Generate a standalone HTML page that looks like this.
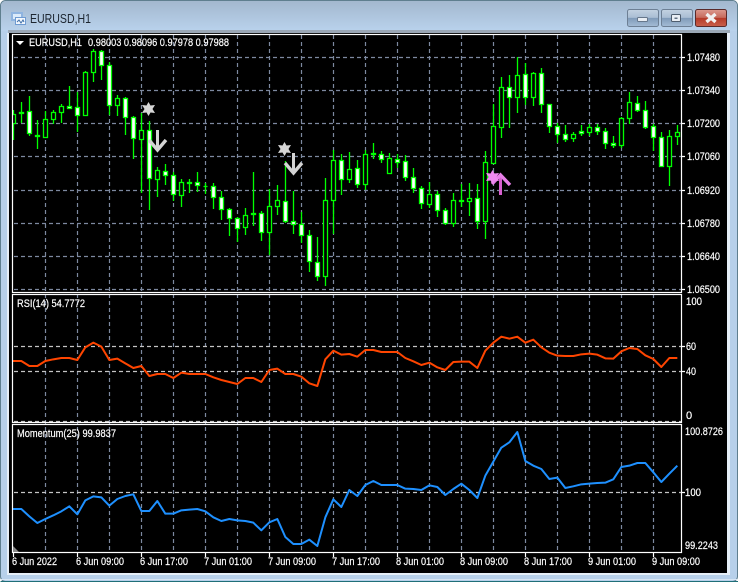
<!DOCTYPE html>
<html><head><meta charset="utf-8"><style>
html,body{margin:0;padding:0;background:#fff}
body{width:739px;height:583px;overflow:hidden}
svg{display:block}
text{font-family:"Liberation Sans",Arial,sans-serif;font-size:11px;fill:#fff;stroke:#fff;stroke-width:.2}
.c{shape-rendering:crispEdges}
</style></head><body>
<svg width="739" height="583" viewBox="0 0 739 583" xmlns="http://www.w3.org/2000/svg">
<defs>
<linearGradient id="t" x1="0" y1="0" x2="0" y2="1"><stop offset="0" stop-color="#a3b8ce"/><stop offset="1" stop-color="#b9d2ec"/></linearGradient>
<linearGradient id="b" x1="0" y1="0" x2="0" y2="1"><stop offset="0" stop-color="#c3d2e2"/><stop offset=".48" stop-color="#a9bdd3"/><stop offset=".5" stop-color="#7f9ab8"/><stop offset="1" stop-color="#a4bcd6"/></linearGradient>
<linearGradient id="r" x1="0" y1="0" x2="0" y2="1"><stop offset="0" stop-color="#dc9a8e"/><stop offset=".48" stop-color="#c66a5c"/><stop offset=".5" stop-color="#b53a28"/><stop offset="1" stop-color="#c9604c"/></linearGradient>
<clipPath id="m"><rect x="13" y="35" width="668" height="257"/></clipPath>
<clipPath id="p1"><rect x="13" y="295" width="668" height="127"/></clipPath>
<clipPath id="p2"><rect x="13" y="425" width="668" height="127"/></clipPath>
</defs>
<!-- window frame -->
<rect x="0.5" y="0.5" width="737" height="581" rx="5" fill="#b7d0ea" stroke="#5f7f8f"/>
<path d="M1 31V6a5 5 0 0 1 5-5H733a5 5 0 0 1 4 5V31z" fill="url(#t)"/>
<rect x="2" y="572" width="734" height="8" fill="#b7d0ea"/>
<path d="M1 579.5H737" stroke="#d8e6f4"/>
<path d="M0.5 581.5H738" stroke="#1f6f78"/>
<!-- title icon -->
<g class="c">
<rect x="11" y="12" width="12" height="9" fill="#8fb4e0"/>
<rect x="13" y="14" width="8" height="5" fill="#dcebfa"/>
<rect x="15" y="17" width="11" height="8" fill="#6f9bd2"/>
<rect x="16" y="18" width="9" height="6" fill="#f2f7fd"/>
</g>
<path d="M17 22l2-2 2 3 2-3 1 2" fill="none" stroke="#3f6fa8" stroke-width="1"/>
<text x="30" y="23" textLength="61" lengthAdjust="spacingAndGlyphs" style="font-size:13px;fill:#1c2530;stroke:none">EURUSD,H1</text>
<!-- buttons -->
<rect x="627.5" y="9.5" width="31" height="17" rx="2" fill="url(#b)" stroke="#6d7f94"/>
<rect x="637.5" y="17.5" width="10" height="4" rx="1" fill="#e9eef4" stroke="#66778b"/>
<rect x="661.5" y="9.5" width="31" height="17" rx="2" fill="url(#b)" stroke="#6d7f94"/>
<rect x="671.5" y="14.5" width="9" height="7" rx="1" fill="#e9eef4" stroke="#4e5d6e"/>
<rect x="674.5" y="17.5" width="3" height="1.5" fill="#5e6e80"/>
<rect x="695.5" y="9.5" width="31" height="17" rx="2" fill="url(#r)" stroke="#5a2a2a"/>
<path d="M706.5 14l9 8M715.5 14l-9 8" stroke="#f1f1f1" stroke-width="3.4"/>
<!-- client -->
<g class="c">
<rect x="8" y="30" width="722" height="3" fill="#9aa7b5"/>
<rect x="7" y="33" width="723" height="542" fill="#e6eff8"/>
<rect x="9" y="33" width="718" height="540" fill="#000"/>
</g>
<!-- grid -->
<g fill="none" stroke-width="1.2">
<path stroke="#7d89a0" stroke-dasharray="4 3" d="M14 57.5H681M14 90.5H681M14 123.5H681M14 156.5H681M14 190.5H681M14 223.5H681M14 256.5H681M14 289.5H681"/>
<path stroke="#7d89a0" stroke-dasharray="4 3" d="M45.5 35V552M77.5 35V552M109.5 35V552M141.5 35V552M173.5 35V552M205.5 35V552M237.5 35V552M269.5 35V552M301.5 35V552M333.5 35V552M365.5 35V552M397.5 35V552M429.5 35V552M461.5 35V552M493.5 35V552M525.5 35V552M557.5 35V552M589.5 35V552M621.5 35V552M653.5 35V552"/>
<path stroke="#c4c4c4" stroke-dasharray="4 3" d="M14 346.5H681M14 371.5H681M14 421.5H681M14 492.5H681"/>
</g>
<rect x="13" y="293" width="669" height="1" fill="#000"/>
<!-- candles -->
<g clip-path="url(#m)" fill="none" stroke="#00ff00" stroke-width="1.3">
<path d="M13.5 110V140M21.5 102V123M29.5 96V136M37.5 120V149M45.5 111V137M53.5 110V124M61.5 104V123M69.5 86V109M77.5 92V132M85.5 71V116M93.5 49V82M101.5 50V80M109.5 62V115M117.5 95V116M125.5 97V135M133.5 116V159M141.5 113V193M149.5 121V210M157.5 167V197M165.5 164V185M173.5 172V201M181.5 179V207M189.5 179V193M197.5 172V192M205.5 183V194M213.5 183V209M221.5 191V220M229.5 208V236M237.5 217V242M245.5 208V235M253.5 172V226M261.5 211V241M269.5 189V255M277.5 185V215M285.5 161V223M293.5 191V234M301.5 212V243M309.5 230V272M317.5 237V281M325.5 178V286M333.5 150V234M341.5 154V195M349.5 152V183M357.5 160V188M365.5 150V190M373.5 143V159M381.5 151V163M389.5 153V173M397.5 154V168M405.5 155V181M413.5 168V193M421.5 186V209M429.5 182V208M437.5 191V217M445.5 208V225M453.5 193V227M461.5 184V207M469.5 183V216M477.5 184V229M485.5 151V239M493.5 104V163M501.5 77V138M509.5 75V128M517.5 57V113M525.5 63V105M533.5 72V106M541.5 68V113M549.5 104V133M557.5 123V143M565.5 125V142M573.5 132V142M581.5 125V136M589.5 124V136M597.5 124V135M605.5 128V149M613.5 136V148M621.5 117V148M629.5 92V124M637.5 96V112M645.5 101V129M653.5 124V151M661.5 132V167M669.5 130V186M677.5 125V145"/>
<path fill="#000" d="M11.5 114.5h4v9h-4zM19.5 112.5h4v1h-4zM35.5 135.5h4v1h-4zM43.5 119.5h4v18h-4zM51.5 112.5h4v7h-4zM59.5 106.5h4v6h-4zM83.5 72.5h4v43h-4zM91.5 51.5h4v21h-4zM115.5 98.5h4v7h-4zM139.5 130.5h4v9h-4zM155.5 170.5h4v9h-4zM179.5 182.5h4v13h-4zM187.5 182.5h4v1h-4zM203.5 186.5h4v0h-4zM243.5 215.5h4v12h-4zM251.5 213.5h4v1h-4zM267.5 206.5h4v26h-4zM275.5 200.5h4v6h-4zM323.5 200.5h4v76h-4zM331.5 160.5h4v40h-4zM347.5 169.5h4v10h-4zM363.5 154.5h4v30h-4zM371.5 153.5h4v1h-4zM387.5 158.5h4v15h-4zM427.5 194.5h4v10h-4zM451.5 200.5h4v23h-4zM459.5 200.5h4v1h-4zM467.5 198.5h4v3h-4zM483.5 162.5h4v59h-4zM491.5 126.5h4v37h-4zM499.5 87.5h4v40h-4zM515.5 75.5h4v22h-4zM531.5 73.5h4v24h-4zM571.5 134.5h4v4h-4zM587.5 127.5h4v5h-4zM619.5 118.5h4v27h-4zM627.5 102.5h4v16h-4zM667.5 136.5h4v30h-4zM675.5 132.5h4v4h-4z"/>
<path fill="#fff" d="M27.5 111.5h4v22h-4zM67.5 106.5h4v2h-4zM75.5 107.5h4v8h-4zM99.5 51.5h4v14h-4zM107.5 65.5h4v40h-4zM123.5 98.5h4v19h-4zM131.5 117.5h4v21h-4zM147.5 130.5h4v48h-4zM163.5 171.5h4v4h-4zM171.5 175.5h4v19h-4zM195.5 182.5h4v3h-4zM211.5 186.5h4v11h-4zM219.5 197.5h4v12h-4zM227.5 209.5h4v9h-4zM235.5 218.5h4v10h-4zM259.5 213.5h4v19h-4zM283.5 201.5h4v20h-4zM291.5 221.5h4v3h-4zM299.5 224.5h4v11h-4zM307.5 235.5h4v26h-4zM315.5 262.5h4v14h-4zM339.5 160.5h4v19h-4zM355.5 168.5h4v16h-4zM379.5 154.5h4v5h-4zM395.5 159.5h4v3h-4zM403.5 161.5h4v16h-4zM411.5 177.5h4v11h-4zM419.5 188.5h4v15h-4zM435.5 194.5h4v16h-4zM443.5 210.5h4v13h-4zM475.5 198.5h4v23h-4zM507.5 87.5h4v10h-4zM523.5 74.5h4v23h-4zM539.5 73.5h4v31h-4zM547.5 104.5h4v22h-4zM555.5 126.5h4v8h-4zM563.5 134.5h4v5h-4zM579.5 131.5h4v2h-4zM595.5 127.5h4v4h-4zM603.5 131.5h4v12h-4zM611.5 143.5h4v2h-4zM635.5 103.5h4v7h-4zM643.5 110.5h4v17h-4zM651.5 126.5h4v11h-4zM659.5 137.5h4v29h-4z"/>
</g>
<!-- arrows / stars -->
<g fill="#d6d6d6">
<polygon points="148.5,102 150.5,105.5 155,105 152.5,109 155,113 150.5,112.5 148.5,116 146.5,112.5 142,113 144.5,109 142,105 146.5,105.5"/>
<polygon points="284.5,142 286.5,145.5 291,145 288.5,149 291,153 286.5,152.5 284.5,156 282.5,152.5 278,153 280.5,149 278,145 282.5,145.5"/>
</g>
<g fill="none" stroke="#d4d4d4" stroke-linejoin="miter">
<path d="M157.5 130V150" stroke-width="3"/><path d="M149 140L157.5 150L166 140" stroke-width="3.4"/>
<path d="M293.5 153V173" stroke-width="3"/><path d="M285 163L293.5 173L302 163" stroke-width="3.4"/>
</g>
<g fill="none" stroke="#e87fe8" stroke-linejoin="miter">
<path d="M500.5 176V195" stroke-width="3" stroke="#d860d0"/><path d="M492 184L500.5 175L510 185" stroke-width="3.4"/>
</g>
<polygon fill="#f08af0" points="492.5,170 494.5,173.5 499,173 496.5,177 499,181 494.5,180.5 492.5,184 490.5,180.5 486,181 488.5,177 486,173 490.5,173.5"/>
<!-- indicators -->
<g clip-path="url(#p1)"><polyline transform="translate(0,290) scale(.33333)" fill="none" stroke="#ff4500" stroke-width="6" stroke-linejoin="round" points="16,213 40,213 64,213 88,228 112,228 136,213 160,208 184,204 208,204 232,210 256,172 280,158 304,170 328,210 352,206 376,220 400,234 424,228 448,258 472,252 496,252 520,264 544,248 568,252 592,252 616,252 640,262 664,270 688,276 712,282 736,264 760,264 784,276 808,240 832,236 856,252 880,252 904,260 928,280 952,288 976,208 1000,182 1024,194 1048,192 1072,200 1096,180 1120,180 1144,186 1168,186 1192,186 1216,204 1240,214 1264,225 1288,218 1312,232 1336,240 1360,216 1384,215 1408,215 1432,234 1456,182 1480,158 1504,140 1528,146 1552,140 1576,158 1600,149 1624,172 1648,188 1672,197 1696,198 1720,198 1744,193 1768,191 1792,194 1816,205 1840,206 1864,184 1888,174 1912,177 1936,196 1960,207 1984,231 2008,204 2032,204"/></g>
<g clip-path="url(#p2)"><polyline transform="translate(0,433) scale(.33333)" fill="none" stroke="#1e90ff" stroke-width="6" stroke-linejoin="round" points="16,228 40,228 64,228 88,250 112,270 136,258 160,247 184,235 208,220 232,244 256,202 280,190 304,193 328,218 352,198 376,189 400,184 424,234 448,234 472,204 496,242 520,242 544,232 568,230 592,228 616,235 640,253 664,264 688,258 712,262 736,264 760,269 784,292 808,268 832,258 856,312 880,333 904,333 928,320 952,339 976,253 1000,199 1024,222 1048,171 1072,189 1096,156 1120,144 1144,156 1168,156 1192,156 1216,167 1240,168 1264,171 1288,157 1312,162 1336,186 1360,168 1384,152 1408,171 1432,195 1456,128 1480,86 1504,44 1528,28 1552,-3 1576,84 1600,98 1624,108 1648,138 1672,134 1696,165 1720,160 1744,154 1768,152 1792,150 1816,149 1840,139 1864,102 1888,98 1912,90 1936,90 1960,118 1984,147 2008,122 2032,98"/></g>
<!-- panel borders -->
<g fill="none" stroke="#fff" stroke-width="1.2">
<rect x="12.5" y="34.5" width="669" height="258"/>
<rect x="12.5" y="294.5" width="669" height="128"/>
<rect x="12.5" y="424.5" width="669" height="128"/>
<path d="M681 57.5h4M681 90.5h4M681 123.5h4M681 156.5h4M681 190.5h4M681 223.5h4M681 256.5h4M681 289.5h4M681 346.5h4M681 371.5h4M681 492.5h4M13.5 552V557M77.5 552V557M141.5 552V557M205.5 552V557M269.5 552V557M333.5 552V557M397.5 552V557M461.5 552V557M525.5 552V557M589.5 552V557M653.5 552V557"/>
</g>
<polygon points="13,546 13,552 19,552" fill="#8a8a8a"/>
<polygon points="16,41 24,41 20,45" fill="#fff"/>
<!-- labels -->
<text x="29" y="46" textLength="53" lengthAdjust="spacingAndGlyphs">EURUSD,H1</text>
<text x="88" y="46" textLength="141" lengthAdjust="spacingAndGlyphs">0.98003 0.98096 0.97978 0.97988</text>
<text x="17" y="307" textLength="68" lengthAdjust="spacingAndGlyphs">RSI(14) 54.7772</text>
<text x="17" y="437" textLength="99" lengthAdjust="spacingAndGlyphs">Momentum(25) 99.9837</text>
<text x="687" y="61" textLength="33" lengthAdjust="spacingAndGlyphs">1.07480</text>
<text x="687" y="94" textLength="33" lengthAdjust="spacingAndGlyphs">1.07340</text>
<text x="687" y="127" textLength="33" lengthAdjust="spacingAndGlyphs">1.07200</text>
<text x="687" y="160" textLength="33" lengthAdjust="spacingAndGlyphs">1.07060</text>
<text x="687" y="194" textLength="33" lengthAdjust="spacingAndGlyphs">1.06920</text>
<text x="687" y="227" textLength="33" lengthAdjust="spacingAndGlyphs">1.06780</text>
<text x="687" y="260" textLength="33" lengthAdjust="spacingAndGlyphs">1.06640</text>
<text x="687" y="293" textLength="33" lengthAdjust="spacingAndGlyphs">1.06500</text>
<text x="686" y="305" textLength="16" lengthAdjust="spacingAndGlyphs">100</text>
<text x="686" y="350" textLength="10" lengthAdjust="spacingAndGlyphs">60</text>
<text x="686" y="375" textLength="10" lengthAdjust="spacingAndGlyphs">40</text>
<text x="686" y="419">0</text>
<text x="685" y="435" textLength="38" lengthAdjust="spacingAndGlyphs">100.8726</text>
<text x="685" y="496" textLength="16" lengthAdjust="spacingAndGlyphs">100</text>
<text x="685" y="549" textLength="33" lengthAdjust="spacingAndGlyphs">99.2243</text>
<text x="12" y="565" textLength="45" lengthAdjust="spacingAndGlyphs">6 Jun 2022</text>
<text x="76" y="565" textLength="48" lengthAdjust="spacingAndGlyphs">6 Jun 09:00</text>
<text x="140" y="565" textLength="48" lengthAdjust="spacingAndGlyphs">6 Jun 17:00</text>
<text x="204" y="565" textLength="48" lengthAdjust="spacingAndGlyphs">7 Jun 01:00</text>
<text x="268" y="565" textLength="48" lengthAdjust="spacingAndGlyphs">7 Jun 09:00</text>
<text x="332" y="565" textLength="48" lengthAdjust="spacingAndGlyphs">7 Jun 17:00</text>
<text x="396" y="565" textLength="48" lengthAdjust="spacingAndGlyphs">8 Jun 01:00</text>
<text x="460" y="565" textLength="48" lengthAdjust="spacingAndGlyphs">8 Jun 09:00</text>
<text x="524" y="565" textLength="48" lengthAdjust="spacingAndGlyphs">8 Jun 17:00</text>
<text x="588" y="565" textLength="48" lengthAdjust="spacingAndGlyphs">9 Jun 01:00</text>
<text x="652" y="565" textLength="48" lengthAdjust="spacingAndGlyphs">9 Jun 09:00</text>
</svg>
</body></html>
